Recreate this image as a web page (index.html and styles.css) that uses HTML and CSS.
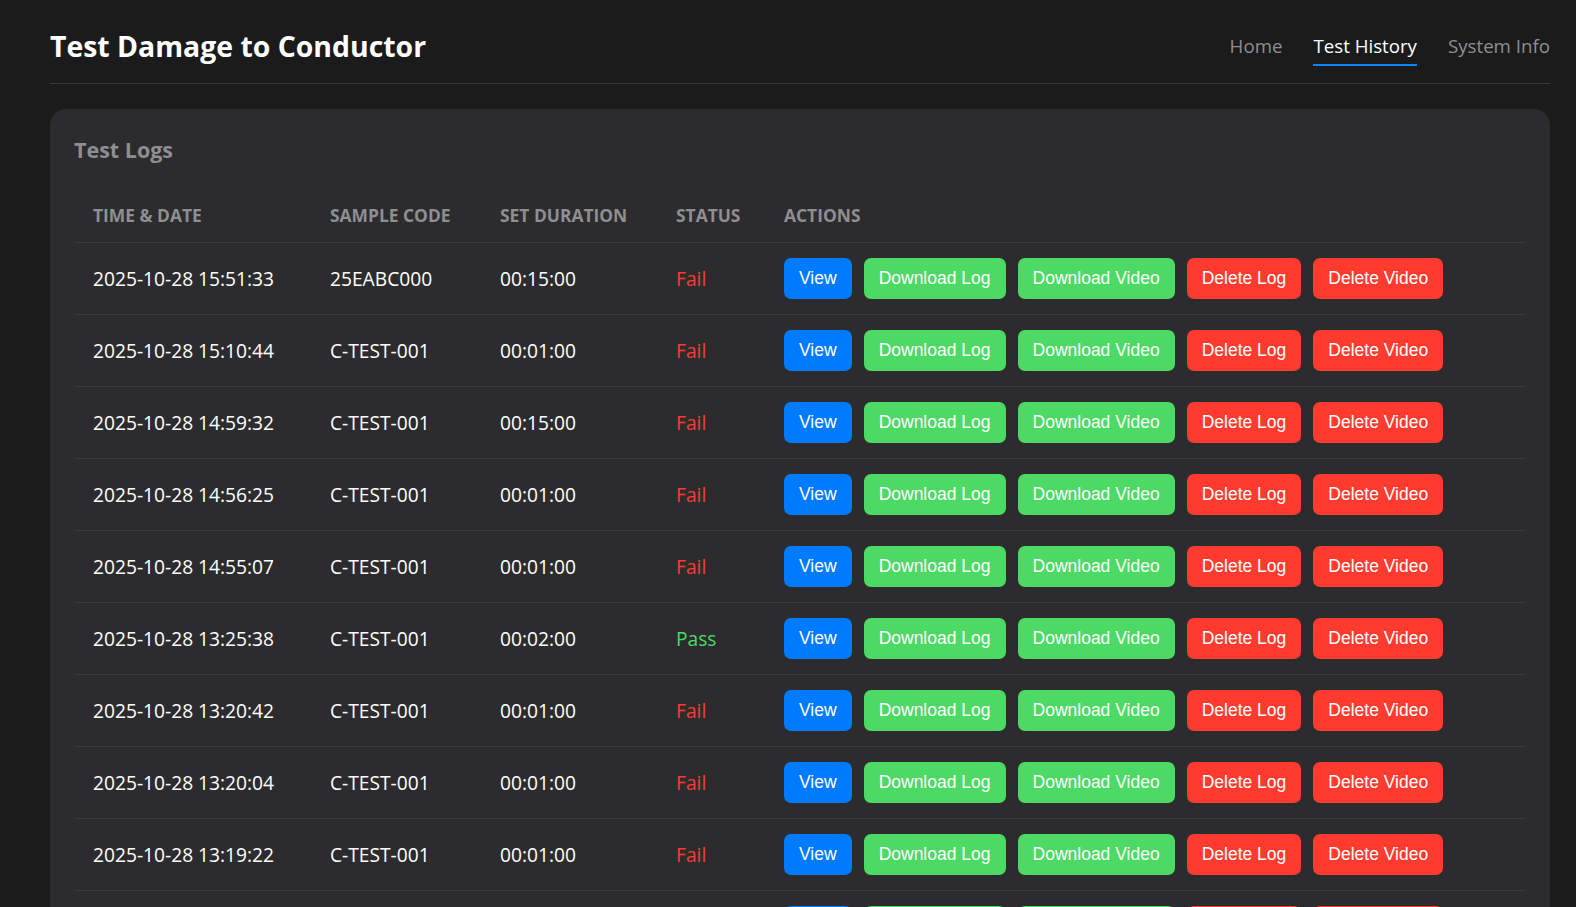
FILE: index.html
```html
<!DOCTYPE html>
<html lang="en">
<head>
<meta charset="utf-8">
<title>Test Damage to Conductor</title>
<link rel="stylesheet" href="styles.css">
</head>
<body>
<div class="page">
  <header class="header">
    <h1 class="title">Test Damage to Conductor</h1>
    <nav class="nav">
      <a class="nav-link" href="#">Home</a>
      <a class="nav-link active" href="#">Test History</a>
      <a class="nav-link" href="#">System Info</a>
    </nav>
  </header>
  <main class="card">
    <h2 class="card-title">Test Logs</h2>
    <table class="logs">
      <colgroup>
        <col class="c-time"><col class="c-code"><col class="c-dur"><col class="c-status"><col>
      </colgroup>
      <thead>
        <tr><th>Time &amp; Date</th><th>Sample Code</th><th>Set Duration</th><th>Status</th><th>Actions</th></tr>
      </thead>
      <tbody>
        <tr><td>2025-10-28 15:51:33</td><td>25EABC000</td><td>00:15:00</td><td class="fail">Fail</td><td><div class="actions"><button class="btn blue">View</button><button class="btn green">Download Log</button><button class="btn green">Download Video</button><button class="btn red">Delete Log</button><button class="btn red">Delete Video</button></div></td></tr>
        <tr><td>2025-10-28 15:10:44</td><td>C-TEST-001</td><td>00:01:00</td><td class="fail">Fail</td><td><div class="actions"><button class="btn blue">View</button><button class="btn green">Download Log</button><button class="btn green">Download Video</button><button class="btn red">Delete Log</button><button class="btn red">Delete Video</button></div></td></tr>
        <tr><td>2025-10-28 14:59:32</td><td>C-TEST-001</td><td>00:15:00</td><td class="fail">Fail</td><td><div class="actions"><button class="btn blue">View</button><button class="btn green">Download Log</button><button class="btn green">Download Video</button><button class="btn red">Delete Log</button><button class="btn red">Delete Video</button></div></td></tr>
        <tr><td>2025-10-28 14:56:25</td><td>C-TEST-001</td><td>00:01:00</td><td class="fail">Fail</td><td><div class="actions"><button class="btn blue">View</button><button class="btn green">Download Log</button><button class="btn green">Download Video</button><button class="btn red">Delete Log</button><button class="btn red">Delete Video</button></div></td></tr>
        <tr><td>2025-10-28 14:55:07</td><td>C-TEST-001</td><td>00:01:00</td><td class="fail">Fail</td><td><div class="actions"><button class="btn blue">View</button><button class="btn green">Download Log</button><button class="btn green">Download Video</button><button class="btn red">Delete Log</button><button class="btn red">Delete Video</button></div></td></tr>
        <tr><td>2025-10-28 13:25:38</td><td>C-TEST-001</td><td>00:02:00</td><td class="pass">Pass</td><td><div class="actions"><button class="btn blue">View</button><button class="btn green">Download Log</button><button class="btn green">Download Video</button><button class="btn red">Delete Log</button><button class="btn red">Delete Video</button></div></td></tr>
        <tr><td>2025-10-28 13:20:42</td><td>C-TEST-001</td><td>00:01:00</td><td class="fail">Fail</td><td><div class="actions"><button class="btn blue">View</button><button class="btn green">Download Log</button><button class="btn green">Download Video</button><button class="btn red">Delete Log</button><button class="btn red">Delete Video</button></div></td></tr>
        <tr><td>2025-10-28 13:20:04</td><td>C-TEST-001</td><td>00:01:00</td><td class="fail">Fail</td><td><div class="actions"><button class="btn blue">View</button><button class="btn green">Download Log</button><button class="btn green">Download Video</button><button class="btn red">Delete Log</button><button class="btn red">Delete Video</button></div></td></tr>
        <tr><td>2025-10-28 13:19:22</td><td>C-TEST-001</td><td>00:01:00</td><td class="fail">Fail</td><td><div class="actions"><button class="btn blue">View</button><button class="btn green">Download Log</button><button class="btn green">Download Video</button><button class="btn red">Delete Log</button><button class="btn red">Delete Video</button></div></td></tr>
        <tr><td>2025-10-28 13:18:40</td><td>C-TEST-001</td><td>00:01:00</td><td class="fail">Fail</td><td><div class="actions"><button class="btn blue">View</button><button class="btn green">Download Log</button><button class="btn green">Download Video</button><button class="btn red">Delete Log</button><button class="btn red">Delete Video</button></div></td></tr>
      </tbody>
    </table>
  </main>
</div>
</body>
</html>
```

FILE: styles.css
```css
html, body {
  margin: 0;
  padding: 0;
  background: #1b1b1b;
}

body {
  font-family: "Open Sans", "Noto Sans", sans-serif;
  color: #ffffff;
  overflow: hidden;
}

.page {
  width: 1500px;
  margin-left: 50px;
}

.header {
  box-sizing: border-box;
  height: 84px;
  padding-top: 9px;
  display: flex;
  align-items: center;
  justify-content: space-between;
  border-bottom: 1px solid #3a3a3c;
}

.title {
  margin: 0;
  font-size: 28.4px;
  font-weight: 700;
  line-height: 38px;
  color: #ffffff;
}

.nav {
  display: flex;
  gap: 31px;
}

.nav-link {
  font-size: 18.7px;
  line-height: 26px;
  color: #8e8e93;
  text-decoration: none;
  padding: 7px 0 5px;
  border-bottom: 2px solid transparent;
}

.nav-link.active {
  color: #ffffff;
  border-bottom-color: #0a84ff;
}

.card {
  display: block;
  margin-top: 25px;
  background: #2c2c2e;
  border-radius: 16px;
  padding: 26px 24px 24px;
}

.card-title {
  margin: 0 0 23px;
  font-size: 21.5px;
  line-height: 30px;
  font-weight: 700;
  color: #8e8e93;
}

.logs {
  width: 100%;
  border-collapse: collapse;
  table-layout: fixed;
}

.c-time { width: 237px; }
.c-code { width: 170px; }
.c-dur { width: 176px; }
.c-status { width: 108px; }

.logs th {
  text-align: left;
  text-transform: uppercase;
  font-size: 17.4px;
  font-weight: 700;
  line-height: 24px;
  color: #8e8e93;
  padding: 15px 19px;
  border-bottom: 1px solid #3a3a3c;
}

.logs td {
  font-size: 19.2px;
  line-height: 24px;
  color: #ffffff;
  padding: 15px 19px;
  border-bottom: 1px solid #3a3a3c;
  vertical-align: middle;
  white-space: nowrap;
}

.logs td.fail { color: #ff3b30; }
.logs td.pass { color: #4cd964; }

.actions {
  display: flex;
  gap: 12px;
}

.btn {
  font-family: "Liberation Sans", Arial, sans-serif;
  font-size: 17.5px;
  line-height: 21px;
  padding: 10px 15px;
  border: none;
  border-radius: 7px;
  color: #ffffff;
  cursor: pointer;
}

.btn.blue { background: #007aff; }
.btn.green { background: #4cd964; }
.btn.red { background: #ff3b30; }
```
